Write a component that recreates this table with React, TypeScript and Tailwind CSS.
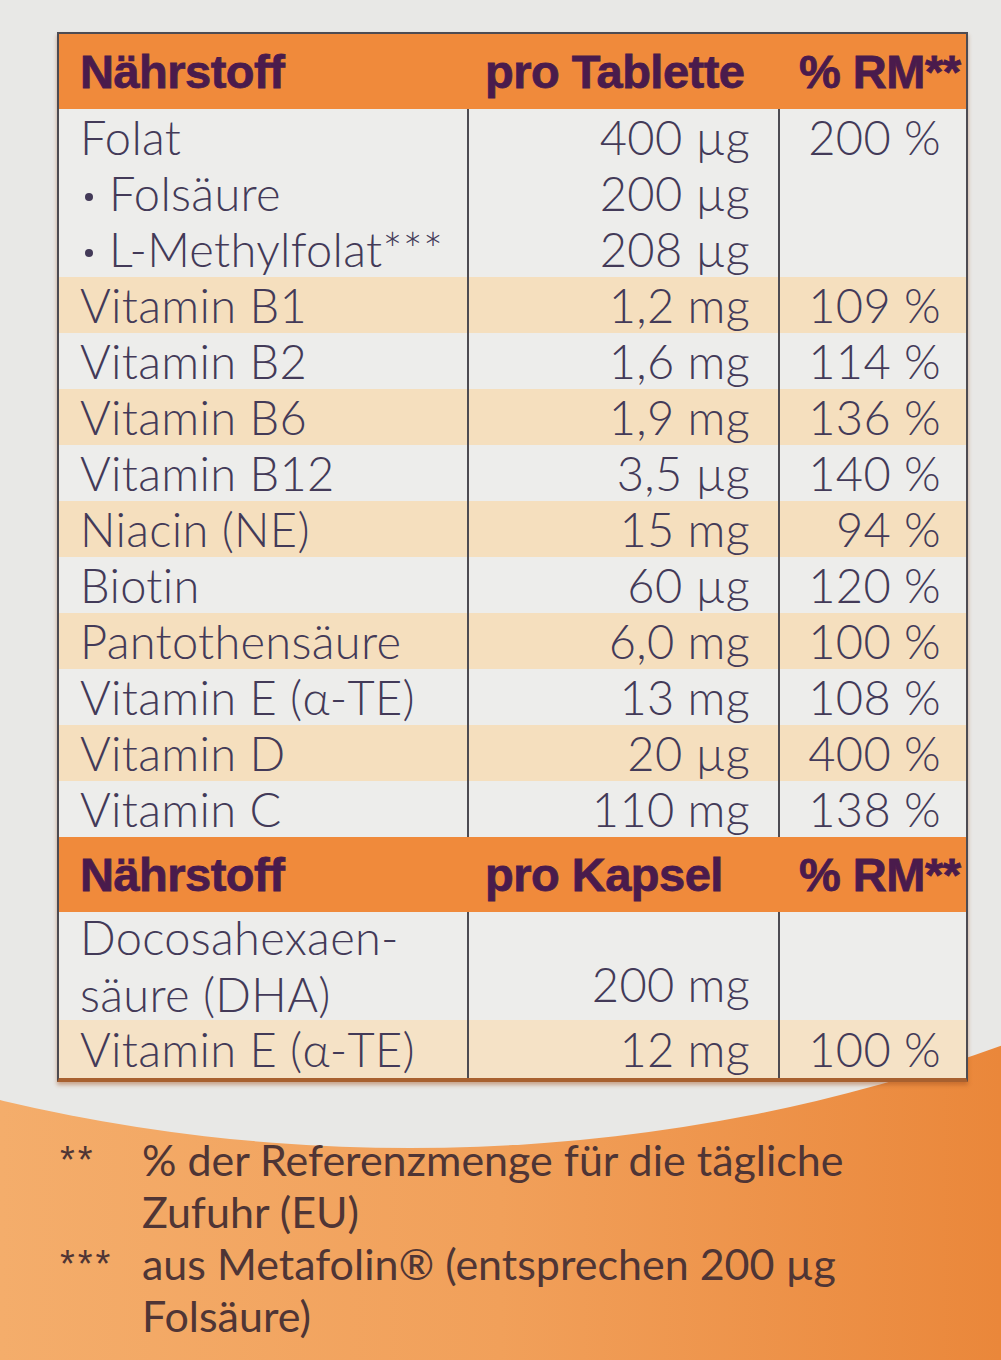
import React from "react";

type Row = { name: React.ReactNode; amount: string; rm: string; stripe?: boolean };

const Dot = () => (
  <span className="inline-block w-[8px] h-[8px] rounded-full bg-[#433a58] mr-[16px] ml-[5px] relative top-[4px]" />
);

const rows: Row[] = [
  { name: "Folat", amount: "400 µg", rm: "200 %" },
  { name: <><Dot />Folsäure</>, amount: "200 µg", rm: "" },
  { name: <><Dot />L-Methylfolat***</>, amount: "208 µg", rm: "" },
  { name: "Vitamin B1", amount: "1,2 mg", rm: "109 %", stripe: true },
  { name: "Vitamin B2", amount: "1,6 mg", rm: "114 %" },
  { name: "Vitamin B6", amount: "1,9 mg", rm: "136 %", stripe: true },
  { name: "Vitamin B12", amount: "3,5 µg", rm: "140 %" },
  { name: "Niacin (NE)", amount: "15 mg", rm: "94 %", stripe: true },
  { name: "Biotin", amount: "60 µg", rm: "120 %" },
  { name: "Pantothensäure", amount: "6,0 mg", rm: "100 %", stripe: true },
  { name: "Vitamin E (α-TE)", amount: "13 mg", rm: "108 %" },
  { name: "Vitamin D", amount: "20 µg", rm: "400 %", stripe: true },
  { name: "Vitamin C", amount: "110 mg", rm: "138 %" },
];

function Header({ mid }: { mid: string }) {
  return (
    <div className="grid grid-cols-[410px_311px_187px] h-[75px] items-center bg-[#f08a3b] text-[#4a1b4c] font-bold text-[47px] tracking-[-0.5px] leading-none [font-family:'Liberation_Sans',Arial,sans-serif] [-webkit-text-stroke:0.8px_#4a1b4c]">
      <div className="pl-[21px]">Nährstoff</div>
      <div className="pl-[16px] whitespace-nowrap">{mid}</div>
      <div className="pl-[19px] whitespace-nowrap">% RM**</div>
    </div>
  );
}

function BodyRow({ r }: { r: Row }) {
  const bg = r.stripe ? "bg-[#f5dfbe]" : "bg-[#ededeb]";
  return (
    <div className={`grid grid-cols-[410px_311px_187px] h-[56px] ${bg}`}>
      <div className="pl-[21px] flex items-center border-r-2 border-[#4d4b52] whitespace-nowrap">{r.name}</div>
      <div className="pr-[28px] flex items-center justify-end border-r-2 border-[#4d4b52] whitespace-nowrap">{r.amount}</div>
      <div className="pr-[26px] flex items-center justify-end whitespace-nowrap">{r.rm}</div>
    </div>
  );
}

export default function App() {
  return (
    <div className="relative w-[1001px] h-[1360px] overflow-hidden bg-gradient-to-r from-[#f4ad6b] via-[#f1a05a] to-[#ea873a]">
      <div className="absolute left-[-990px] top-[-1038px] w-[2800px] h-[2186px] rounded-[50%] bg-[#e8e8e6]" />
      <div className="relative flex flex-col">
        <div className="pt-[32px] pl-[57px]">
          <div className="w-[911px] border-2 border-[#4d4b52] border-b-[4px] border-b-[#a8602f] shadow-[0_3px_4px_rgba(160,80,30,0.45)] text-[#433a58] text-[47px] font-light leading-none [font-family:Lato,'Open_Sans',sans-serif] tracking-[0.3px]">
            <Header mid="pro Tablette" />
            {rows.map((r, i) => (
              <BodyRow key={i} r={r} />
            ))}
            <Header mid="pro Kapsel" />
            <div className="grid grid-cols-[410px_311px_187px] h-[108px] bg-[#ededeb]">
              <div className="pl-[21px] flex flex-col justify-center gap-[10px] border-r-2 border-[#4d4b52]">
                <div>Docosahexaen-</div>
                <div>säure (DHA)</div>
              </div>
              <div className="pr-[28px] pb-[12px] flex items-end justify-end border-r-2 border-[#4d4b52]">200 mg</div>
              <div />
            </div>
            <div className="grid grid-cols-[410px_311px_187px] h-[58px] bg-[#f5e2c6]">
              <div className="pl-[21px] flex items-center border-r-2 border-[#4d4b52] whitespace-nowrap">Vitamin E (α-TE)</div>
              <div className="pr-[28px] flex items-center justify-end border-r-2 border-[#4d4b52]">12 mg</div>
              <div className="pr-[26px] flex items-center justify-end">100 %</div>
            </div>
          </div>
        </div>
        <div className="pt-[52px] pl-[60px] text-[#4f3535] text-[43px] leading-[52px] [font-family:Lato,'Open_Sans',sans-serif]">
          <div className="grid grid-cols-[82px_1fr]">
            <div className="text-[38px] tracking-[3px] [font-family:'Liberation_Sans',Arial,sans-serif]">**</div>
            <div>
              % der Referenzmenge für die tägliche
              <br />
              Zufuhr (EU)
            </div>
            <div className="text-[38px] tracking-[3px] [font-family:'Liberation_Sans',Arial,sans-serif]">***</div>
            <div>
              aus Metafolin® (entsprechen 200 µg
              <br />
              Folsäure)
            </div>
          </div>
        </div>
      </div>
    </div>
  );
}
